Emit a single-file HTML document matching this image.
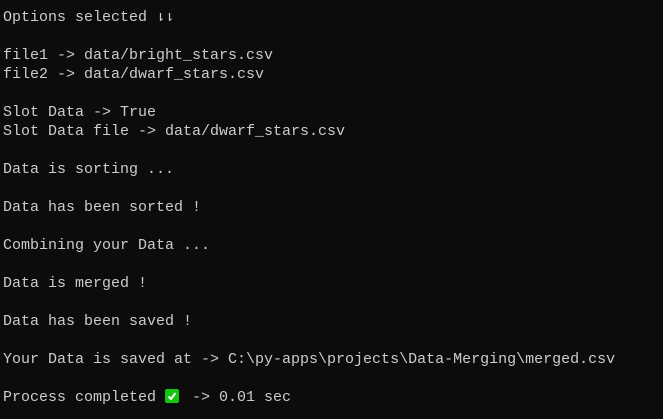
<!DOCTYPE html>
<html><head><meta charset="utf-8"><style>
html,body{margin:0;padding:0;background:#0c0c0c;width:663px;height:419px;overflow:hidden}
pre{margin:0;padding:8px 0 0 3px;font-family:"Liberation Mono","DejaVu Sans Mono",monospace;font-size:15px;line-height:19px;color:#cccccc;white-space:pre}
.ck{display:inline-block;width:14px;height:14px;background:#16c60c;border-radius:2px;vertical-align:-2px;margin-right:4px;position:relative}
.ck svg{position:absolute;left:0;top:0}
</style></head><body><pre>Options selected ⇂⇂

file1 -> data/bright_stars.csv
file2 -> data/dwarf_stars.csv

Slot Data -> True
Slot Data file -> data/dwarf_stars.csv

Data is sorting ...

Data has been sorted !

Combining your Data ...

Data is merged !

Data has been saved !

Your Data is saved at -> C:\py-apps\projects\Data-Merging\merged.csv

Process completed <span class="ck"><svg width="14" height="14" viewBox="0 0 14 14"><path d="M3.5 7.5 L6 10 L10.5 4" stroke="#fff" stroke-width="2" fill="none"/></svg></span> -> 0.01 sec</pre></body></html>
